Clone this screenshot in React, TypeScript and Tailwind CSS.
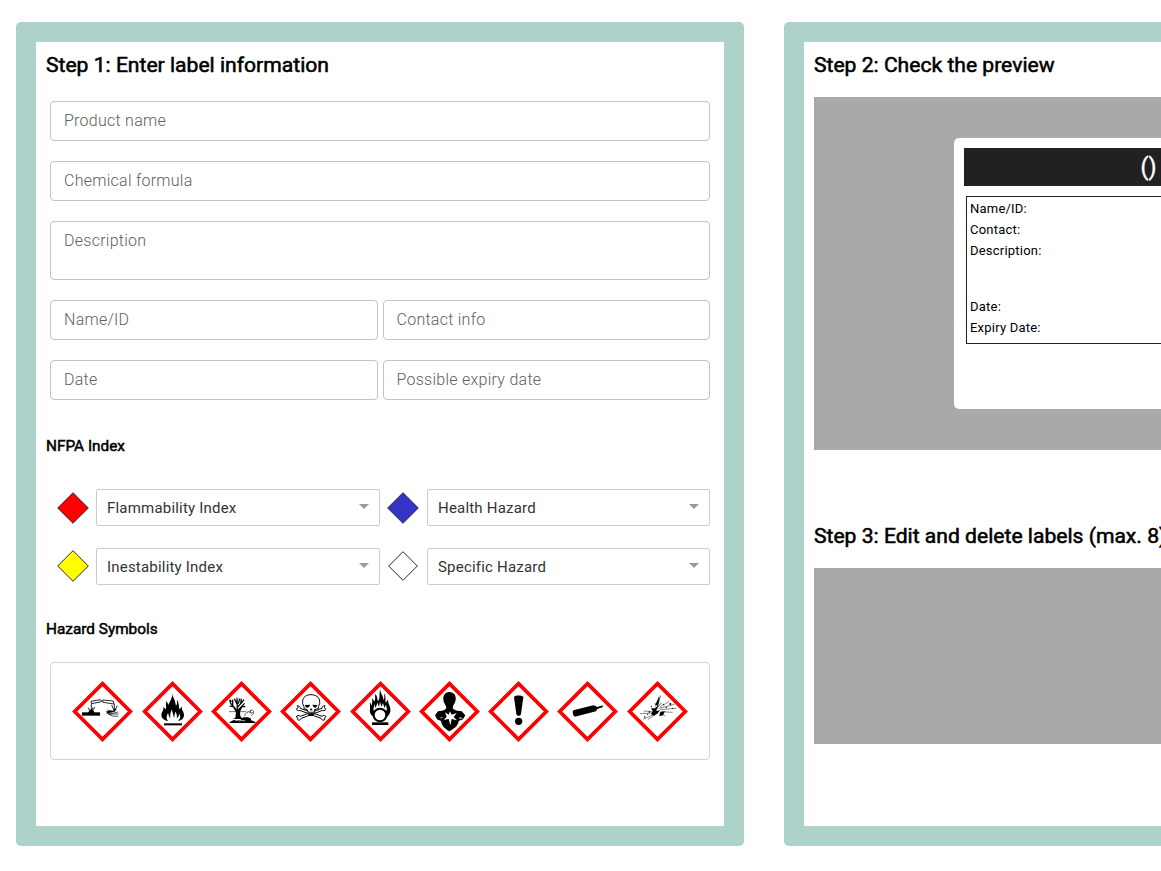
import React from "react";

const HEADING =
  "whitespace-nowrap text-[21.1px] leading-[26px] tracking-normal text-black [-webkit-text-stroke:0.55px_#000]";
const SUBHEADING =
  "pt-px text-[15.35px] leading-[19px] text-black [-webkit-text-stroke:0.5px_#000]";

function Field({ label, tall = false }: { label: string; tall?: boolean }) {
  return (
    <div
      className={
        "min-w-0 flex-1 rounded-[4px] border border-[#c2c2c2] bg-white pl-[13px] pt-[7px] text-[16px] font-light leading-[23px] tracking-[0.26px] text-[#606060] " +
        (tall ? "h-[59px]" : "h-[40px]")
      }
    >
      {label}
    </div>
  );
}

function NfpaSelect({
  label,
  fill,
  half = 16,
  markClass = "mr-[6px]",
}: {
  label: string;
  fill: string;
  half?: number;
  markClass?: string;
}) {
  const c = 17;
  return (
    <div className="flex min-w-0 flex-1 items-center">
      <svg width="34" height="34" viewBox="0 0 34 34" className={"shrink-0 " + markClass}>
        <path
          d={`M${c} ${c - half + 0.7}L${c + half - 0.7} ${c}L${c} ${c + half - 0.7}L${c - half + 0.7} ${c}Z`}
          fill={fill}
          stroke="#2b2233"
          strokeWidth="1"
        />
      </svg>
      <div className="flex h-[37px] min-w-0 flex-1 items-center justify-between rounded-[2px] border border-[#ccc] bg-white pl-[10px] pr-[10px] text-[15px] tracking-[0.2px] text-[#333]">
        <span className="pt-[2px]">{label}</span>
        <svg width="10" height="5" viewBox="0 0 10 5" className="-mt-[2px]">
          <path d="M0 0H10L5 5Z" fill="#999" />
        </svg>
      </div>
    </div>
  );
}

function Pictogram({ children, className = "mr-[8px]" }: { children: React.ReactNode; className?: string }) {
  return (
    <svg width="61" height="61" viewBox="0 0 183 183" className={"shrink-0 " + className}>
      <path d="M91.5 8L175 91.5L91.5 175L8 91.5Z" fill="#fff" stroke="#f00" strokeWidth="11" />
      {children}
    </svg>
  );
}

const line = { fill: "none", stroke: "#000" } as const;

function Corrosion() {
  return (
    <Pictogram className="mr-[9px]">
      <path d="M30 94H84V104H30Z" />
      <path d="M57 61L86 56L89 62L59 68Z M92 57L124 60L126 69L93 64Z" {...line} strokeWidth="2.5" />
      <path d="M58 68V90M49 80L55 93M68 78L60 93M62 80L58 93M127 69V86M119 72L126 88M136 74L128 89" {...line} strokeWidth="2.5" />
      <path d="M51 90L58 84L65 90L68 96H48Z" />
      <path d="M104 92L113 88L124 89L128 83L134 85L128 92L116 95L105 97Z" />
      <path d="M103 90L109 99L121 105L138 106M104 96L117 98L138 93M110 101L122 99L140 99M106 86L114 92" {...line} strokeWidth="2" />
    </Pictogram>
  );
}

function Flame() {
  return (
    <Pictogram>
      <path d="M92 37C91 49 99 55 100 66L102 74C107 70 104 63 105 57C113 67 109 76 113 85L120 76C117 88 126 91 126 102C126 112 119 118 108 120C115 114 117 107 111 97C112 106 108 109 104 112C107 101 102 97 101 92C97 97 99 103 96 111C94 99 90 93 90 85C86 94 83 100 85 112C80 107 81 103 78 96C73 106 72 114 78 120C65 118 58 111 58 102C58 93 66 88 64 77L71 85C75 77 69 70 74 60L79 72C84 61 91 52 92 37Z" />
      <path d="M66 127H120V133H66Z" />
    </Pictogram>
  );
}

function Environment() {
  return (
    <Pictogram>
      <path d="M73 110L75 94L66 79L79 86L96 74L87 92L88 106L96 114H66Z" />
      <path d="M79 89L78 50M78 69L70 53M74 84L59 67L56 56M67 77L55 75M79 79L89 68L91 53M83 85L101 67M92 77L103 77M88 69L99 56M65 72L65 56M82 68L86 53M61 63L58 58" {...line} strokeWidth="3.8" />
      <path d="M54 92H106" {...line} strokeWidth="1.7" />
      <path d="M56 123L68 117L77 119L88 117L97 109L111 109L121 113L119 117L133 123V126H56Z" />
      <path d="M101 105C103 93 113 94 121 87C131 88 130 98 121 104M120 88L116 96L126 95" {...line} strokeWidth="1.9" />
      <path d="M83 121L93 118L103 120" fill="none" stroke="#fff" strokeWidth="2" />
    </Pictogram>
  );
}

function Skull() {
  return (
    <Pictogram className="mr-[9px]">
      <g fill="#fff" stroke="#000" strokeWidth="3">
        <path d="M52 74C59 74 61 79 61 82L126 106C130 101 138 104 138 108C134 108 132 111 135 115C131 120 125 117 123 112L59 88C54 91 48 87 50 83C54 83 55 79 52 74Z" />
        <path d="M135 74C128 74 126 79 126 82L61 106C57 101 49 104 49 108C54 108 55 111 52 115C56 120 62 117 64 112L128 88C133 91 139 87 137 83C133 83 132 79 135 74Z" />
        <path d="M93 41C106 41 119 48 119 61V68L115 77V83L104 86L101 98H86L82 86L72 83V77L68 68V61C68 48 80 41 93 41Z" />
      </g>
      <path d="M74 72L90 71L87 79L79 80ZM97 71L112 72L108 80L101 79ZM93 81L98 88H89ZM83 92H104L101 105H86Z" />
      <path d="M87 92V98M93 92V98M99 92V98" stroke="#fff" strokeWidth="1.7" />
    </Pictogram>
  );
}

function Oxidizer() {
  return (
    <Pictogram>
      <path d="M91 25C90 40 101 43 100 57L103 51L103 37C109 47 105 54 107 65L115 55C112 68 121 73 121 84C123 93 118 101 112 107L68 106C61 101 58 92 60 84L60 64L66 74L67 51L73 62C78 53 74 48 76 39C83 46 81 54 84 61C92 51 86 38 91 25Z" />
      <path d="M70 86L73 70L77 81L82 65L87 77L90 62L94 77L99 66L103 81L108 71L111 87L107 90C98 80 82 80 73 90Z" fill="#fff" />
      <circle cx="90" cy="102" r="19" fill="#fff" stroke="#000" strokeWidth="6" />
      <path d="M66 124H115V132H66Z" />
    </Pictogram>
  );
}

function HealthHazard() {
  return (
    <Pictogram>
      <path d="M91 33C105 33 112 44 110 57C108 68 101 73 101 81C105 89 117 89 128 91L139 103L132 115L119 120C117 137 102 144 91 151C80 144 69 137 66 120L54 115L48 103L57 91C68 89 78 89 82 81C82 72 74 67 73 56C72 43 79 33 91 33Z" />
      <path d="M78 94L89 101L93 91L98 101L113 96L104 108L114 118L98 114L94 133L89 114L74 117L83 107ZM59 111L72 109L70 112ZM122 109L133 112L120 113Z" fill="#fff" />
    </Pictogram>
  );
}

function Exclamation() {
  return (
    <Pictogram>
      <path d="M78 49C78 42 106 42 106 49L99 99C98 106 86 106 85 99Z" />
      <circle cx="92" cy="121" r="11" />
    </Pictogram>
  );
}

function GasCylinder() {
  return (
    <Pictogram className="mr-[9px]">
      <path d="M52 87L109 73L116 75L120 78L134 74L137 72V79L121 84L117 91L59 106C53 108 49 105 48 98C46 92 47 88 52 87Z" />
    </Pictogram>
  );
}

function Explosion() {
  return (
    <Pictogram className="">
      <path d="M72 82L85 82L92 74L88 90L99 88L91 98L80 104L72 99L77 91Z M99 94L114 90L108 103L97 106Z" />
      <path d="M90 84L100 44M86 72L96 48M91 80L103 66" {...line} strokeWidth="2" />
      <path d="M97 82L143 70M99 86L148 82M98 79L127 61M101 92L137 94M77 96L39 98M75 92L50 90M78 101L49 115M84 101L63 115M101 96L115 105M87 80L84 66" {...line} strokeWidth="1.4" />
      <path d="M93 57L97 46L95 65L91 76L86 70Z" />
      <g>
        <circle cx="130" cy="69" r="3" /><circle cx="118" cy="80" r="2" />
        <circle cx="53" cy="108" r="2.5" /><circle cx="67" cy="93" r="2.5" />
        <circle cx="62" cy="100" r="2" /><circle cx="109" cy="70" r="2" />
        <circle cx="73" cy="76" r="2" /><circle cx="137" cy="82" r="2" />
      </g>
    </Pictogram>
  );
}

function Panel({ children, className }: { children: React.ReactNode; className: string }) {
  return (
    <section className={"h-[824px] shrink-0 rounded-[5px] bg-[#add2c9] p-[20px] " + className}>
      <div className="h-full bg-white px-[10px] pt-[10px]">{children}</div>
    </section>
  );
}

export default function App() {
  return (
    <main className="flex h-[871px] w-full gap-[40px] overflow-hidden bg-white pl-[16px] pt-[22px] font-[Roboto,sans-serif]">
      <Panel className="w-[728px]">
        <h2 className={HEADING}>Step 1: Enter label information</h2>
        <div className="mx-[4px] mt-[23px] flex flex-col gap-[20px]">
          <div className="flex"><Field label="Product name" /></div>
          <div className="flex"><Field label="Chemical formula" /></div>
          <div className="flex"><Field label="Description" tall /></div>
          <div className="flex gap-[5px]">
            <Field label="Name/ID" />
            <Field label="Contact info" />
          </div>
          <div className="flex gap-[5px]">
            <Field label="Date" />
            <Field label="Possible expiry date" />
          </div>
        </div>
        <h3 className={"mt-[36px] " + SUBHEADING}>NFPA Index</h3>
        <div className="ml-[10px] mr-[4px] mt-[33px] flex flex-col gap-[22px]">
          <div className="flex gap-[6px]">
            <NfpaSelect label="Flammability Index" fill="#f00" />
            <NfpaSelect label="Health Hazard" fill="#3634c6" markClass="mr-[7px]" />
          </div>
          <div className="flex gap-[6px]">
            <NfpaSelect label="Inestability Index" fill="#ff0" markClass="mb-[2px] mr-[6px]" />
            <NfpaSelect label="Specific Hazard" fill="#fff" half={15} markClass="mb-[2px] mr-[7px]" />
          </div>
        </div>
        <h3 className={"mt-[34px] " + SUBHEADING}>Hazard Symbols</h3>
        <div className="mx-[4px] mt-[23px] flex h-[98px] items-center rounded-[4px] border border-[#d3d3d3] pl-[21px]">
          <Corrosion />
          <Flame />
          <Environment />
          <Skull />
          <Oxidizer />
          <HealthHazard />
          <Exclamation />
          <GasCylinder />
          <Explosion />
        </div>
      </Panel>
      <Panel className="w-[728px]">
        <h2 className={HEADING}>Step 2: Check the preview</h2>
        <div className="mt-[19px] flex h-[353px] justify-center bg-[#a9a9a9] pt-[41px]">
          <div className="h-[271px] w-[388px] rounded-[5px] bg-white p-[10px]">
            <div className="flex h-[38px] items-center justify-center bg-[#212121] pl-px pt-[2px] text-[23px] text-white [-webkit-text-stroke:0.4px_#fff]">
              ()
            </div>
            <div className="mx-[2px] mt-[10px] flex h-[148px] flex-col border border-[#212121] pl-[3px] pt-px text-[13px] leading-[21px] tracking-[0.22px] text-black">
              <span>Name/ID:</span>
              <span>Contact:</span>
              <span className="h-[56px]">Description:</span>
              <span>Date:</span>
              <span>Expiry Date:</span>
            </div>
          </div>
        </div>
        <h2 className={"mt-[73px] " + HEADING}>Step 3: Edit and delete labels (max. 8)</h2>
        <div className="mt-[19px] h-[176px] bg-[#a9a9a9]" />
      </Panel>
    </main>
  );
}
